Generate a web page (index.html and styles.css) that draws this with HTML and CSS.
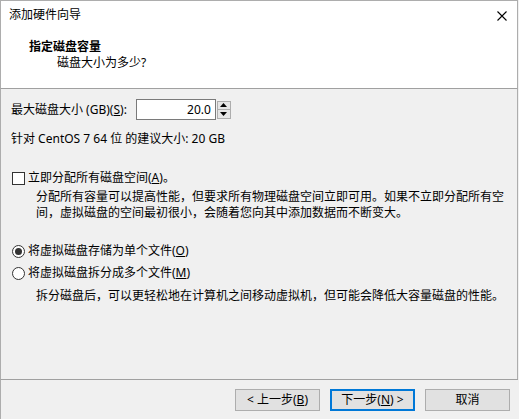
FILE: index.html
```html
<!DOCTYPE html>
<html lang="zh-CN">
<head>
<meta charset="utf-8">
<title>添加硬件向导</title>
<link rel="stylesheet" href="styles.css">
</head>
<body>
<div class="window">
  <div class="header">
    <div class="titlebar">
      <span class="title">添加硬件向导</span>
      <svg class="close" width="10" height="10" viewBox="0 0 10 10"><path d="M0.5 0.5 L9.5 9.5 M9.5 0.5 L0.5 9.5" stroke="#000" stroke-width="1.1" fill="none"/></svg>
    </div>
    <div class="heading">指定磁盘容量</div>
    <div class="subheading">磁盘大小为多少?</div>
  </div>
  <div class="content">
    <div class="size-row">
      <span class="label">最大磁盘大小 (GB)(<u>S</u>):</span>
      <div class="spinbox">
        <div class="spin-input">20.0</div>
        <div class="spin-buttons">
          <div class="spin-btn"><svg width="7" height="4" viewBox="0 0 7 4"><path d="M3.5 0 L7 4 L0 4 Z" fill="#000"/></svg></div>
          <div class="spin-btn"><svg width="7" height="4" viewBox="0 0 7 4"><path d="M0 0 L7 0 L3.5 4 Z" fill="#000"/></svg></div>
        </div>
      </div>
    </div>
    <div class="recommend">针对 CentOS 7 64 位 的建议大小: 20 GB</div>
    <div class="option check-row">
      <span class="checkbox"></span>
      <span>立即分配所有磁盘空间(<u>A</u>)。</span>
    </div>
    <div class="desc desc-alloc">分配所有容量可以提高性能，但要求所有物理磁盘空间立即可用。如果不立即分配所有空<br>间，虚拟磁盘的空间最初很小，会随着您向其中添加数据而不断变大。</div>
    <div class="option radio-row first">
      <span class="radio checked"></span>
      <span>将虚拟磁盘存储为单个文件(<u>O</u>)</span>
    </div>
    <div class="option radio-row second">
      <span class="radio"></span>
      <span>将虚拟磁盘拆分成多个文件(<u>M</u>)</span>
    </div>
    <div class="desc desc-split">拆分磁盘后，可以更轻松地在计算机之间移动虚拟机，但可能会降低大容量磁盘的性能。</div>
  </div>
  <div class="footer">
    <button class="btn">&lt; 上一步(<u>B</u>)</button>
    <button class="btn default">下一步(<u>N</u>) &gt;</button>
    <button class="btn">取消</button>
  </div>
</div>
</body>
</html>
```

FILE: styles.css
```css
* { box-sizing: border-box; }
html, body {
  margin: 0;
  padding: 0;
  background: #f0f0f0;
}
body {
  width: 519px;
  height: 419px;
  overflow: hidden;
  font-family: "Noto Sans", "Noto Sans CJK SC", sans-serif;
  font-size: 12px;
  color: #000;
}
.window {
  width: 518px;
  height: 419px;
  display: flex;
  flex-direction: column;
  border-top: 1px solid #adadad;
}
.header {
  background: #fff;
  height: 88px;
  border-left: 1px solid #adadad;
  border-right: 1px solid #adadad;
  border-bottom: 1px solid #a0a0a0;
  padding-top: 6px;
}
.titlebar {
  display: flex;
  justify-content: space-between;
  align-items: center;
  height: 16px;
  padding-left: 8px;
  padding-right: 10px;
}
.title { line-height: 16px; }
.close { display: block; margin-top: 2px; }
.heading {
  font-weight: bold;
  line-height: 16px;
  margin-top: 16px;
  padding-left: 28px;
}
.subheading {
  line-height: 16px;
  padding-left: 56px;
}
.content {
  flex: 1;
  border-left: 1px solid #adadad;
  border-right: 1px solid #adadad;
  padding-left: 10px;
  padding-top: 10px;
  white-space: nowrap;
}
.size-row {
  display: flex;
  align-items: center;
  height: 21px;
}
.label { line-height: 16px; }
.spinbox {
  display: flex;
  align-items: center;
  margin-left: 9px;
}
.spin-input {
  width: 80px;
  height: 21px;
  border: 1px solid #7a7a7a;
  background: #fff;
  text-align: right;
  padding-right: 4px;
  line-height: 19px;
}
.spin-buttons {
  display: flex;
  flex-direction: column;
  margin-left: 1px;
  width: 14px;
  height: 18px;
}
.spin-btn {
  flex: 1;
  display: flex;
  align-items: center;
  justify-content: center;
  background: #e5e5e5;
  border: 1px solid #adadad;
}
.spin-btn + .spin-btn { border-top: none; }
.spin-btn svg { display: block; }
.recommend {
  line-height: 16px;
  margin-top: 11px;
}
.option {
  display: flex;
  align-items: center;
  line-height: 16px;
  height: 16px;
}
.check-row { margin-top: 23px; }
.checkbox {
  width: 13px;
  height: 13px;
  border: 1px solid #333;
  background: #fff;
  margin-left: 1px;
  margin-right: 3px;
}
.desc {
  padding-left: 25px;
  line-height: 16px;
}
.desc-alloc { margin-top: 3px; }
.radio-row.first { margin-top: 22px; }
.radio-row.second { margin-top: 6px; }
.radio {
  width: 13px;
  height: 13px;
  border: 1px solid #333;
  border-radius: 50%;
  background: #fff;
  margin-left: 1px;
  margin-right: 3px;
  display: flex;
  align-items: center;
  justify-content: center;
}
.radio.checked::after {
  content: "";
  width: 7px;
  height: 7px;
  border-radius: 50%;
  background: #333;
}
.desc-split { margin-top: 7px; }
.footer {
  height: 40px;
  border-top: 1px solid #a0a0a0;
  display: flex;
  justify-content: flex-end;
  gap: 10px;
  padding-top: 9px;
  padding-right: 8px;
  border-left: 1px solid #adadad;
}
.btn {
  width: 85px;
  height: 22px;
  background: #e1e1e1;
  border: 1px solid #adadad;
  font-family: inherit;
  font-size: 12px;
  color: #000;
  padding: 0;
  line-height: 18px;
}
.btn.default {
  border: 2px solid #0078d7;
}
```
